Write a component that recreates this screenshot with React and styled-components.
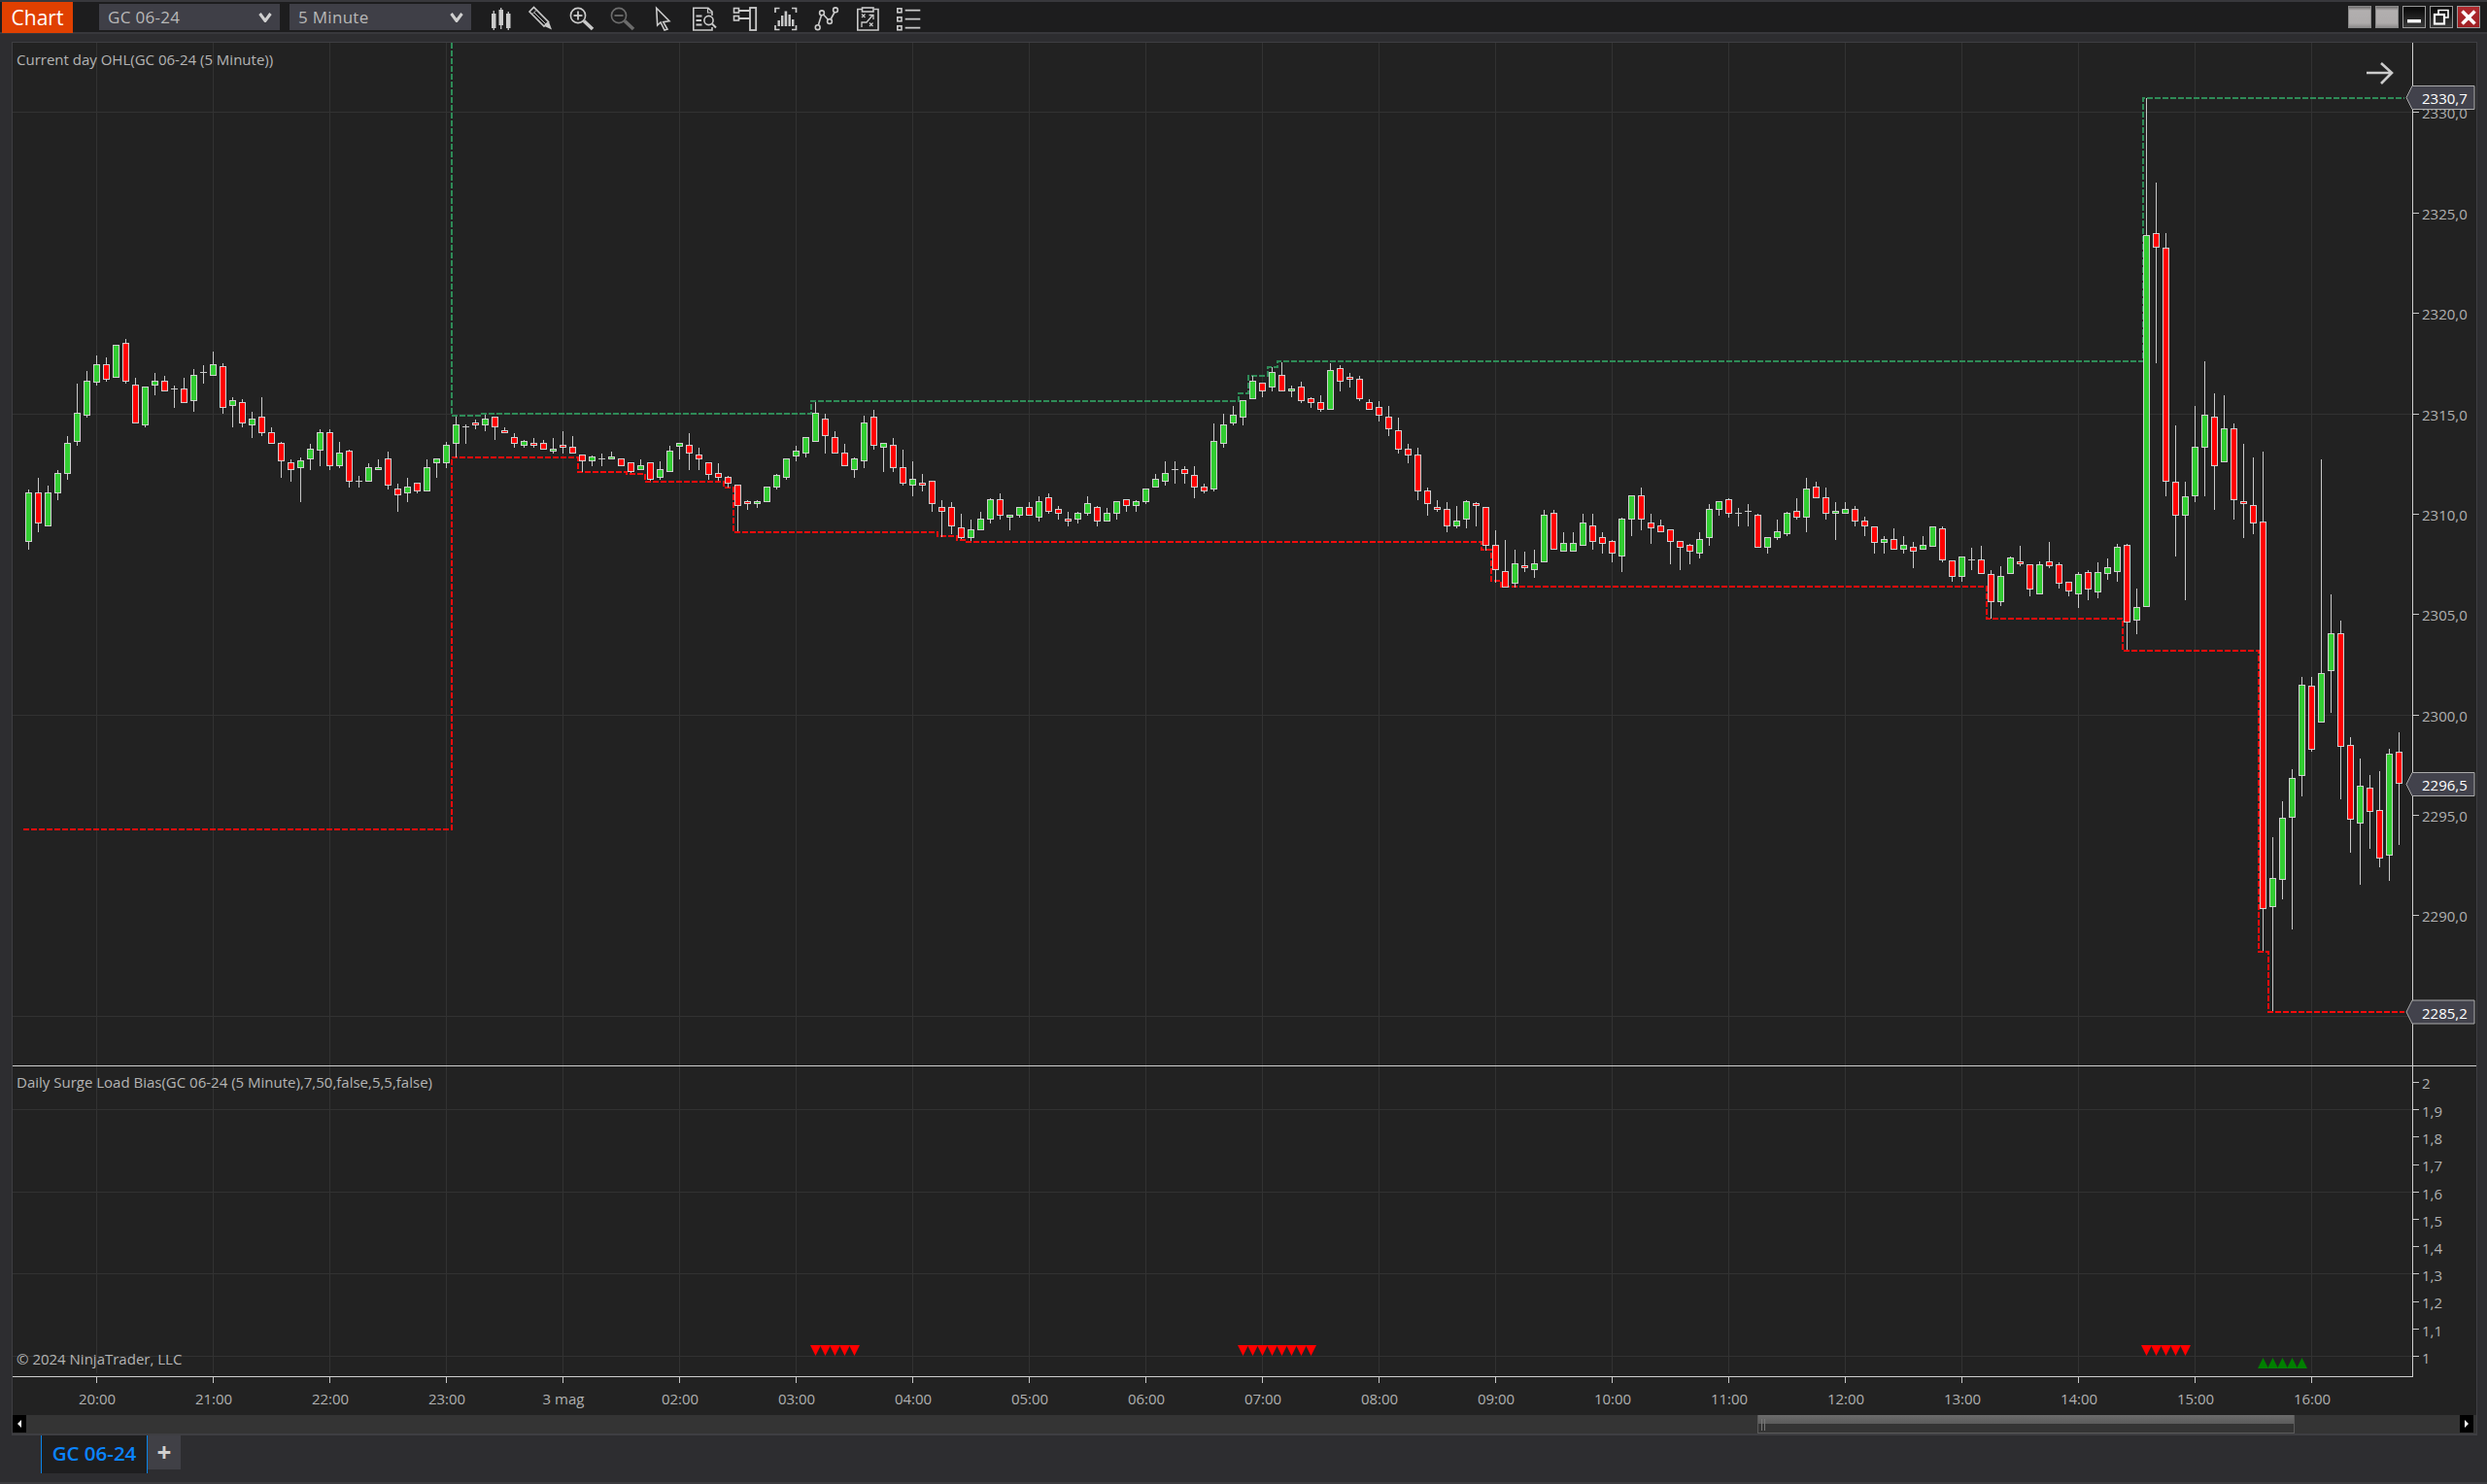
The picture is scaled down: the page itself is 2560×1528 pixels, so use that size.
import React from "react";
import styled, { createGlobalStyle } from "styled-components";

const GlobalStyle = createGlobalStyle`
  html, body { margin: 0; padding: 0; background: #2d2d30; }
  body { font-family: "Open Sans", "Liberation Sans", sans-serif; }
`;

/* ---------- market data, as read from the chart (body top, body bottom, wick top, wick bottom) ---------- */
const SEGMENTS = [
  { start: 0, base: 330, scale: 3, rows: "g 532 683 522 707|r 532 626 486 654|g 532 635 510 635|g 472 533 462 555|g 379 473 357 492|g 286 374 195 387|g 187 293 156 299|g 136 193 108 201|r 136 182 114 189|g 76 176 76 176|r 70 188 57 195|r 199 317 177 317|g 205 323 205 330|g 187 200 162 231|r 187 218 171 218|d 211 212 201 270|r 211 254 177 254|g 169 248 150 282|d 160 161 138 195|g 136 170 96 170|r 142 269 132 288|g 247 263 237 330|r 253 317 243 330|g 304 323 282 363|r 298 347 237 357|r 346 380 330 380|r 379 434 376 486|r 439 461 429 498|g 433 455 423 561|g 397 428 381 462|g 346 403 337 450|r 346 449 337 462|g 409 449 375 456|r 403 497 399 516|d 496 497 480 516|g 454 497 441 497|g 454 461 429 461|r 427 509 405 522|r 520 541 504 591|g 514 533 486 561|r 502 527 502 534|g 454 527 429 527|g 427 440 427 486|g 385 440 375 456|g 322 380 296 422|d 327 329 322 381|r 316 323 306 336|g 304 323 292 342|r 298 329 298 369|r 340 347 330 347|r 361 380 348 393|g 373 386 370 393|r 379 386 363 393|r 379 398 369 398|g 397 404 363 411|r 385 392 342 411|r 391 410 357 410|r 415 434 415 468|g 421 434 418 450|d 427 428 411 450|g 421 428 405 428" },
  { start: 61, base: 350, scale: 3, rows: "r 367 389 367 389|r 379 407 379 412|g 388 401 369 401|r 379 431 379 435|g 400 425 375 431|g 343 407 327 407|g 319 331 319 369|r 325 350 288 402|r 355 368 333 402|r 379 418 379 432|r 412 425 381 435|r 424 443 420 456|r 448 512 448 592|r 499 506 495 525|g 499 506 495 519|g 454 500 454 500|g 418 455 415 461|g 367 425 367 431|g 343 361 327 375|g 301 350 301 363|g 226 314 192 314|r 244 296 228 351|r 301 350 282 350|r 349 389 321 389|g 367 401 363 426|g 256 374 234 396|r 238 326 216 339|g 319 332 319 408|r 325 395 303 408|r 394 443 339 450|g 430 449 375 483|r 442 449 414 468|r 436 506 436 531|r 517 530 495 608|r 517 575 501 600|r 580 612 537 615|g 586 611 555 621|g 553 587 531 587|g 493 554 489 567|r 493 542 474 555|g 541 548 541 588|g 517 542 517 549|r 517 542 501 542|g 499 548 483 561|r 487 530 474 537|r 523 536 513 555|r 553 560 531 576|g 535 554 531 567|g 505 536 483 543|r 517 560 513 576|g 535 560 519 560|g 499 536 499 555|r 493 512 493 531|g 499 512 495 531|g 460 500 460 507|g 430 455 414 455|g 412 437 375 450|d 400 401 375 444|r 400 413 390 444|r 418 455 390 489|r 454 467 444 474|g 313 461 258 468|g 262 320 228 333|g 232 257 204 264|g 187 239 187 263" },
  { start: 126, base: 350, scale: 3, rows: "g 127 182 112 182|r 133 158 133 177|g 100 146 85 158|r 109 158 70 158|g 151 158 141 177|r 145 188 129 194|r 181 194 177 209|r 193 215 171 221|g 94 215 71 215|r 88 128 78 159|r 115 122 102 147|r 121 182 111 188|r 193 215 183 215|r 208 233 189 252|r 238 275 204 297|r 280 338 240 351|r 337 356 321 381|r 355 467 333 495|r 466 506 456 543|r 517 524 495 531|r 523 575 501 594|g 559 575 513 582|g 499 554 495 582|r 505 512 501 576|r 517 635 517 650|r 634 710 588 750|r 715 765 618 765|g 691 752 648 765|r 697 704 654 717|g 691 710 648 735|g 541 686 525 686|r 535 647 525 647|g 628 653 594 653|g 628 653 594 653|g 565 635 537 635|r 574 623 537 648|r 610 629 594 660|r 622 659 618 687|g 553 668 549 717|g 481 554 481 606|r 481 554 456 588|r 565 581 537 630|r 574 593 555 593|r 586 623 586 693|r 622 641 622 711|r 634 653 630 693|g 616 659 594 675|g 523 611 507 636|g 499 524 499 543|r 493 536 489 549|d 535 536 519 576|d 529 530 507 576|r 541 641 537 641|g 610 641 610 660|g 592 611 555 618|g 535 599 531 606|r 529 548 489 555|g 460 548 426 594|r 454 488 438 488|r 487 536 456 555|g 529 536 501 618|g 523 536 501 536|r 523 560 513 576|r 559 575 547 606" },
  { start: 190, base: 80, scale: 2.613, rows: "r 1206 1252 1206 1280|g 1242 1252 1233 1280|r 1242 1269 1213 1269|g 1258 1269 1233 1280|r 1263 1274 1249 1320|g 1258 1269 1233 1269|g 1206 1263 1206 1263|r 1212 1298 1208 1303|r 1298 1344 1298 1355|g 1287 1344 1287 1355|d 1297 1298 1265 1325|r 1297 1334 1260 1334|r 1334 1410 1325 1456|g 1340 1410 1315 1422|g 1292 1334 1288 1334|r 1302 1308 1260 1314|r 1308 1378 1308 1396|g 1308 1389 1300 1389|r 1302 1314 1249 1320|r 1308 1361 1304 1374|r 1355 1383 1355 1396|g 1334 1389 1330 1427|r 1329 1378 1325 1406|g 1329 1384 1304 1400|g 1318 1334 1294 1351|g 1263 1329 1255 1356|r 1258 1465 1255 1540|g 1425 1460 1375 1496|g 422 1425 55 1425|r 417 458 282 768|r 458 1086 418 1126|r 1086 1178 936 1288|g 1125 1178 1086 1406|g 994 1125 883 1142|g 908 995 763 1126|r 913 1044 849 1163|g 944 1036 855 1036|r 944 1136 930 1189|r 1140 1146 985 1239|r 1151 1199 1022 1228" },
  { start: 230, base: 540, scale: 2.958, rows: "r -10 1170 -222 1299|g 1078 1164 953 1483|g 894 1084 843 1141|g 773 894 746 1233|g 487 767 464 827|r 492 687 464 693|g 454 602 -198 602|g 332 448 213 574|r 332 676 293 836|r 670 900 648 999|g 797 912 713 1097|r 803 877 763 988|r 871 1019 751 1043|g 699 1010 684 1085|r 693 791 633 976" },
];

const BARS = SEGMENTS.flatMap(({ start, base, scale, rows }) =>
  rows.split("|").map((row, i) => {
    const [kind, ...values] = row.split(" ");
    const [bodyTop, bodyBottom, wickTop, wickBottom] = values.map((v) => Math.round(base + Number(v) / scale));
    return { x: 29.5 + (start + i) * 10, kind, bodyTop, bodyBottom, wickTop, wickBottom };
  })
);

const HIGH_PATH = "465,44 465,428 496,428 496,426 835,426 835,413 1275,413 1275,405 1285,405 1285,387 1305,387 1305,378 1315,378 1315,372 2206,372 2206,101 2475,101";
const LOW_PATH = "24,854 465,854 465,471 595,471 595,486 645,486 645,488 664,488 664,496 745,496 745,502 755,502 755,548 965,548 965,552 985,552 985,556 994,556 994,558 1525,558 1525,566 1535,566 1535,598 1545,598 1545,604 2045,604 2045,637 2185,637 2185,670 2325,670 2325,980 2335,980 2335,1042 2475,1042";

const HOURS = ["20:00", "21:00", "22:00", "23:00", "3 mag", "02:00", "03:00", "04:00", "05:00", "06:00", "07:00", "08:00", "09:00", "10:00", "11:00", "12:00", "13:00", "14:00", "15:00", "16:00"];
const GRID_X = HOURS.map((_, i) => 99.5 + i * 120);
const priceY = (p) => 425.5 + (2315 - p) * 20.67;
const PRICE_TICKS = [2330, 2325, 2320, 2315, 2310, 2305, 2300, 2295, 2290];
const PRICE_GRID = [2330, 2315, 2300, 2285];
const BADGES = [
  { label: "2330,7", cy: 100.5 },
  { label: "2296,5", cy: 807.5 },
  { label: "2285,2", cy: 1042 },
];
const LOWER_TICKS = [
  ["2", 1114], ["1,9", 1142.5], ["1,8", 1170.5], ["1,7", 1199], ["1,6", 1227.5], ["1,5", 1255.5],
  ["1,4", 1283.5], ["1,3", 1311.5], ["1,2", 1340], ["1,1", 1368.5], ["1", 1396.5],
];
const LOWER_GRID = [1142.5, 1227.5, 1311.5, 1396.5];
const DOWN_MARKS = [81, 82, 83, 84, 85, 125, 126, 127, 128, 129, 130, 131, 132, 218, 219, 220, 221, 222];
const UP_MARKS = [230, 231, 232, 233, 234];
const barX = (k) => 29.5 + k * 10;

/* ---------- page shell ---------- */
const Window = styled.div`
  width: 2560px;
  height: 1528px;
  display: flex;
  flex-direction: column;
  background: #2d2d30;
  overflow: hidden;
  box-sizing: border-box;
  border-bottom: 2px solid #3a3a3e;
`;

const Toolbar = styled.header`
  height: 35px;
  flex: none;
  box-sizing: border-box;
  display: flex;
  align-items: center;
  background: #1d1d1e;
  border-top: 2px solid #38383c;
  border-bottom: 2px solid #38383c;
`;

const ChartTab = styled.div`
  width: 73px;
  height: 32px;
  margin-left: 2px;
  margin-top: 1px;
  display: flex;
  align-items: center;
  justify-content: center;
  background: #e04000;
  color: #fff;
  font-size: 21px;
`;

const Dropdown = styled.div`
  width: ${(p) => p.$width}px;
  height: 27px;
  margin-left: ${(p) => p.$gap}px;
  box-sizing: border-box;
  padding: 0 8px 0 9px;
  display: flex;
  align-items: center;
  justify-content: space-between;
  background: #3f3f47;
  color: #b8b8b8;
  font-size: 17px;
  letter-spacing: 0.3px;
`;

const Chevron = styled.svg`
  width: 14px;
  height: 10px;
  fill: none;
  stroke: #d0d0d0;
  stroke-width: 3;
`;

const IconRow = styled.div`
  display: flex;
  margin-left: 9px;
`;

const IconButton = styled.div`
  width: 42px;
  height: 31px;
  display: flex;
  align-items: center;
  justify-content: center;
`;

const Glyph = styled.svg`
  width: 32px;
  height: 32px;
  fill: none;
  stroke: ${(p) => (p.$dim ? "#6c6c6c" : "#cacaca")};
  stroke-width: 1.6;
`;

const WindowButtons = styled.div`
  margin-left: auto;
  padding-right: 7px;
  display: flex;
  gap: 4px;
`;

const WindowButton = styled.div`
  width: 24px;
  height: 23px;
  box-sizing: border-box;
  display: flex;
  align-items: center;
  justify-content: center;
  border: 1px solid ${(p) => (p.$kind === "blank" ? "#8a8a8a" : "#9a9a9a")};
  background: ${(p) =>
    p.$kind === "blank"
      ? "linear-gradient(#6e6c6c, #b2afaf 18%, #aeabab 80%, #8f8d8d)"
      : p.$kind === "close"
      ? "linear-gradient(#b02a2e, #a02024)"
      : "linear-gradient(#060606, #3a3a3a)"};
`;

const ChartFrame = styled.main`
  flex: none;
  padding: 8px 10px 0 12px;
  display: flex;
  flex-direction: column;
`;

const ChartBody = styled.section`
  display: flex;
  flex-direction: column;
  background: #222222;
  border-left: 1px solid #3e3e42;
  border-top: 1px solid #3e3e42;
  border-right: 1px solid #3e3e42;
`;

const Pane = styled.div`
  position: relative;
  height: ${(p) => p.$height}px;
  flex: none;
`;

const PaneDrawing = styled.svg`
  display: block;
  width: 100%;
  height: 100%;
`;

const Legend = styled.div`
  position: absolute;
  left: 4px;
  top: ${(p) => p.$top}px;
  color: #b4b4b4;
  font-size: 15px;
  line-height: 20px;
  white-space: nowrap;
`;

const AxisText = styled.text`
  font-family: "Open Sans", "Liberation Sans", sans-serif;
  font-size: 15px;
  fill: ${(p) => (p.$bright ? "#ffffff" : "#b0b0b0")};
`;

const TimeAxis = styled.div`
  height: 39px;
  flex: none;
  padding-left: 27px;
  display: flex;
  color: #b0b0b0;
  font-size: 15px;
`;

const TimeLabel = styled.div`
  position: relative;
  width: 120px;
  flex: none;
  text-align: center;
  padding-top: 12px;
  line-height: 20px;
  &::before {
    content: "";
    position: absolute;
    left: 59px;
    top: 0;
    width: 1px;
    height: 6px;
    background: #c8c8c8;
  }
`;

const Scrollbar = styled.div`
  height: 21px;
  flex: none;
  display: flex;
  background: #343434;
  box-sizing: border-box;
  border-bottom: 2px solid #3e3e42;
`;

const ScrollArrow = styled.div`
  width: 14px;
  height: 18px;
  flex: none;
  margin-left: ${(p) => (p.$right ? "auto" : "0")};
  margin-right: ${(p) => (p.$right ? "3px" : "0")};
  display: flex;
  align-items: center;
  justify-content: center;
  background: #000;
  &::after {
    content: "";
    border-style: solid;
    border-width: 4px 0 4px 0;
    border-color: transparent #fff;
    border-left-width: ${(p) => (p.$right ? "4px" : "0")};
    border-right-width: ${(p) => (p.$right ? "0" : "4px")};
  }
`;

const ScrollThumb = styled.div`
  position: relative;
  width: 553px;
  height: 19px;
  margin-left: 1782px;
  box-sizing: border-box;
  border: 1px solid #5a5a5a;
  border-top: none;
  background: linear-gradient(#6c6c6c, #5a5a5a 52%, #343434 52%, #343434);
  &::before {
    content: "";
    position: absolute;
    left: 3px;
    top: 4px;
    width: 1px;
    height: 12px;
    background: #777;
    box-shadow: 3px 0 0 #777;
  }
`;

const TabBar = styled.nav`
  flex: 1;
  display: flex;
  align-items: flex-start;
  padding-left: 42px;
`;

const Tab = styled.div`
  width: 110px;
  height: 39px;
  box-sizing: border-box;
  padding-bottom: 3px;
  display: flex;
  align-items: center;
  justify-content: center;
  background: #1e1e1f;
  border-left: 1px solid #0a84e8;
  border-right: 1px solid #0a84e8;
  color: #0a84ff;
  font-size: 20.5px;
  font-weight: 600;
`;

const AddTab = styled.div`
  width: 34px;
  height: 35px;
  padding-bottom: 2px;
  box-sizing: border-box;
  display: flex;
  align-items: center;
  justify-content: center;
  background: #404046;
  color: #cfcfcf;
  font-size: 26px;
  font-weight: 700;
  line-height: 1;
`;

/* ---------- toolbar icons ---------- */
const CandlesIcon = () => (
  <Glyph viewBox="0 0 32 32">
    <g fill="#cacaca" stroke="none">
      <rect x="7" y="12" width="4.5" height="15" /><rect x="8.6" y="9" width="1.3" height="20" />
      <rect x="14.5" y="8" width="4.5" height="16" /><rect x="16.1" y="6" width="1.3" height="22" />
      <rect x="22" y="12" width="4.5" height="15" /><rect x="23.6" y="10" width="1.3" height="19" />
    </g>
  </Glyph>
);
const PencilIcon = () => (
  <Glyph viewBox="0 0 32 32">
    <path d="M4 10l4.5-4.5L23.5 20.5 19 25z" />
    <path d="M7 12.5l4-4M9 11l12 12M12 9l11 11" strokeWidth="1" />
    <path d="M19.5 25l4.5-4.5 3 8z" fill="#cacaca" stroke="none" />
  </Glyph>
);
const ZoomIcon = ({ minus }) => (
  <Glyph viewBox="0 0 32 32" $dim={minus}>
    <circle cx="12" cy="14" r="7.6" />
    <path d="M7.5 14h9" strokeWidth="1.8" />
    {!minus && <path d="M12 9.5v9" strokeWidth="1.8" />}
    <path d="M18 19.5l9 8.5" strokeWidth="3.6" />
  </Glyph>
);
const CursorIcon = () => (
  <Glyph viewBox="0 0 32 32">
    <path d="M8.7 6.3L22 19.7l-6.3 1L20 28l-3 1-4-8-3.3 3z" strokeLinejoin="miter" />
  </Glyph>
);
const ReportIcon = () => (
  <Glyph viewBox="0 0 32 32">
    <path d="M24 14V10L20 6.3H4.8V29H24V26" />
    <path d="M19.5 6.3V11H24" strokeWidth="1.2" />
    <path d="M7.5 14.5h6M7.5 19h5.5M7.5 23.5h6" strokeWidth="1.8" />
    <circle cx="20.5" cy="19" r="4.6" />
    <path d="M24 22.5l4 4" strokeWidth="2" />
  </Glyph>
);
const DataBoxIcon = () => (
  <Glyph viewBox="0 0 32 32">
    <rect x="4.5" y="6.5" width="5" height="4.5" />
    <rect x="4.5" y="14.5" width="5" height="4.5" />
    <path d="M10 9h11M10 17h11" strokeWidth="1.8" />
    <rect x="21" y="6" width="6.2" height="23" strokeWidth="1.8" />
  </Glyph>
);
const BarsIcon = () => (
  <Glyph viewBox="0 0 32 32">
    <path d="M9.5 6.5H5V11M22 6.5h4.5V11M9.5 28.5H5V24M22 28.5h4.5V24" strokeWidth="1.7" />
    <g fill="#cacaca" stroke="none">
      <rect x="7.5" y="19" width="2.4" height="6" /><rect x="11" y="14" width="2.4" height="11" />
      <rect x="14.6" y="9.5" width="2.6" height="15.5" /><rect x="18.5" y="13" width="2.4" height="12" />
      <rect x="22" y="18" width="2.4" height="7" />
    </g>
  </Glyph>
);
const LinksIcon = () => (
  <Glyph viewBox="0 0 32 32">
    <path d="M7.3 24L10.6 13.6M12.6 13l4.8 5.2M20.3 17.5l3.8-7" />
    <circle cx="6.7" cy="26.2" r="2.4" /><circle cx="11" cy="11.3" r="2.4" />
    <circle cx="19" cy="20" r="2.4" /><circle cx="25" cy="8.3" r="2.4" />
  </Glyph>
);
const StrategyIcon = () => (
  <Glyph viewBox="0 0 32 32">
    <path d="M10 7.5H5.8V29H27V7.5h-4.2" />
    <rect x="10.5" y="6" width="11.5" height="4" />
    <path d="M10 12.5l3.5 3.5M13.5 12.5L10 16M18 21.5l3.5 3.5M21.5 21.5L18 25" strokeWidth="1.2" />
    <path d="M10 26v-5h5l6-7M17.5 13.5H22V18" strokeWidth="1.3" />
  </Glyph>
);
const ListIcon = () => (
  <Glyph viewBox="0 0 32 32">
    <rect x="4.8" y="6.8" width="4.2" height="4" /><rect x="4.8" y="15.8" width="4.2" height="4" /><rect x="4.8" y="24.8" width="4.2" height="4" />
    <path d="M12.7 8.7H28.3M12.7 17.7H28.3M12.7 26.7H28.3" strokeWidth="1.8" />
  </Glyph>
);

const TOOL_ICONS = [
  <CandlesIcon />, <PencilIcon />, <ZoomIcon />, <ZoomIcon minus />, <CursorIcon />, <ReportIcon />,
  <DataBoxIcon />, <BarsIcon />, <LinksIcon />, <StrategyIcon />, <ListIcon />,
];

/* ---------- chart drawings ---------- */
const Candle = ({ x, kind, bodyTop, bodyBottom, wickTop, wickBottom }) => {
  const fill = kind === "g" ? "#32cd32" : "#ff0000";
  return (
    <g>
      <line x1={x} x2={x} y1={wickTop} y2={wickBottom} stroke="#c8c8c8" strokeWidth="1" />
      {kind === "d" ? (
        <line x1={x - 3.5} x2={x + 3.5} y1={bodyTop + 0.5} y2={bodyTop + 0.5} stroke="#c8c8c8" strokeWidth="1" />
      ) : (
        <rect x={x - 3} y={bodyTop + 0.5} width="6" height={Math.max(1, bodyBottom - bodyTop - 1)} fill={fill} stroke="#d0d0d0" strokeWidth="1" />
      )}
    </g>
  );
};

const PriceChart = () => (
  <PaneDrawing viewBox="13 44 2536 1053" shapeRendering="crispEdges">
    <g stroke="#323232" strokeWidth="1">
      {GRID_X.map((x) => <line key={x} x1={x} x2={x} y1={44} y2={1097} />)}
      {PRICE_GRID.map((p) => <line key={p} x1={13} x2={2483} y1={Math.round(priceY(p)) + 0.5} y2={Math.round(priceY(p)) + 0.5} />)}
    </g>
    <line x1={2483.5} x2={2483.5} y1={44} y2={1097} stroke="#cfcfcf" />
    <g fill="none" strokeWidth="2" strokeDasharray="6 2">
      <polyline points={HIGH_PATH} stroke="#2e8b57" />
      <polyline points={LOW_PATH} stroke="#f40c0c" />
    </g>
    {BARS.map((bar) => <Candle key={bar.x} {...bar} />)}
    {PRICE_TICKS.map((p) => {
      const y = Math.round(priceY(p)) + 0.5;
      return (
        <g key={p}>
          <line x1={2484} x2={2490} y1={y} y2={y} stroke="#c8c8c8" />
          <AxisText x={2493} y={y + 6.5} shapeRendering="auto">{`${p},0`}</AxisText>
        </g>
      );
    })}
    {BADGES.map(({ label, cy }) => (
      <g key={label} shapeRendering="auto">
        <polygon points={`2477,${cy} 2483,${cy - 12} 2547,${cy - 12} 2547,${cy + 12} 2483,${cy + 12}`} fill="#42424c" stroke="#ababab" strokeWidth="1" />
        <AxisText $bright x={2493} y={cy + 6.5}>{label}</AxisText>
      </g>
    ))}
    <path d="M2436 75h26M2451 65l11 10-11 11" fill="none" stroke="#cccccc" strokeWidth="2.6" shapeRendering="auto" />
  </PaneDrawing>
);

const IndicatorChart = () => (
  <PaneDrawing viewBox="13 1097 2536 321" shapeRendering="crispEdges">
    <line x1={13} x2={2549} y1={1097.5} y2={1097.5} stroke="#d0d0d0" />
    <g stroke="#323232" strokeWidth="1">
      {GRID_X.map((x) => <line key={x} x1={x} x2={x} y1={1098} y2={1414} />)}
      {LOWER_GRID.map((y) => <line key={y} x1={13} x2={2483} y1={y} y2={y} />)}
    </g>
    <line x1={2483.5} x2={2483.5} y1={1097} y2={1418} stroke="#cfcfcf" />
    <line x1={13} x2={2484} y1={1417.5} y2={1417.5} stroke="#cfcfcf" strokeWidth="1" />
    {DOWN_MARKS.map((k) => (
      <polygon key={k} shapeRendering="auto" fill="#ff0000" points={`${barX(k) - 5.5},1385 ${barX(k) + 5.5},1385 ${barX(k)},1396`} />
    ))}
    {UP_MARKS.map((k) => (
      <polygon key={k} shapeRendering="auto" fill="#008000" points={`${barX(k) - 5.5},1409 ${barX(k) + 5.5},1409 ${barX(k)},1398`} />
    ))}
    {LOWER_TICKS.map(([label, y]) => (
      <g key={label}>
        <line x1={2484} x2={2490} y1={y} y2={y} stroke="#c8c8c8" />
        <AxisText x={2493} y={y + 7} shapeRendering="auto">{label}</AxisText>
      </g>
    ))}
  </PaneDrawing>
);

export default function App() {
  return (
    <Window>
      <GlobalStyle />
      <Toolbar>
        <ChartTab>Chart</ChartTab>
        <Dropdown $width={186} $gap={27}>
          GC 06-24
          <Chevron viewBox="0 0 14 10"><path d="M1.5 1l5.5 7.5L12.5 1" /></Chevron>
        </Dropdown>
        <Dropdown $width={187} $gap={10}>
          5 Minute
          <Chevron viewBox="0 0 14 10"><path d="M1.5 1l5.5 7.5L12.5 1" /></Chevron>
        </Dropdown>
        <IconRow>
          {TOOL_ICONS.map((icon, i) => <IconButton key={i}>{icon}</IconButton>)}
        </IconRow>
        <WindowButtons>
          <WindowButton $kind="blank" />
          <WindowButton $kind="blank" />
          <WindowButton $kind="dark">
            <svg width="16" height="16" viewBox="0 0 16 16"><rect x="1" y="10" width="14" height="3.4" fill="#fff" /></svg>
          </WindowButton>
          <WindowButton $kind="dark">
            <svg width="18" height="18" viewBox="0 0 18 18" fill="none" stroke="#fff">
              <path d="M6 5V1.5h10V9h-3" strokeWidth="1.6" />
              <rect x="2" y="6" width="10" height="9.5" strokeWidth="2.2" />
            </svg>
          </WindowButton>
          <WindowButton $kind="close">
            <svg width="18" height="16" viewBox="0 0 18 16" stroke="#fff" strokeWidth="3.6"><path d="M2.5 1.5l13 13M15.5 1.5l-13 13" /></svg>
          </WindowButton>
        </WindowButtons>
      </Toolbar>

      <ChartFrame>
        <ChartBody>
          <Pane $height={1053}>
            <PriceChart />
            <Legend $top={7}>Current day OHL(GC 06-24 (5 Minute))</Legend>
          </Pane>
          <Pane $height={321}>
            <IndicatorChart />
            <Legend $top={7}>Daily Surge Load Bias(GC 06-24 (5 Minute),7,50,false,5,5,false)</Legend>
            <Legend $top={292}>© 2024 NinjaTrader, LLC</Legend>
          </Pane>
          <TimeAxis>
            {HOURS.map((h) => <TimeLabel key={h}>{h}</TimeLabel>)}
          </TimeAxis>
          <Scrollbar>
            <ScrollArrow />
            <ScrollThumb />
            <ScrollArrow $right />
          </Scrollbar>
        </ChartBody>
      </ChartFrame>

      <TabBar>
        <Tab>GC 06-24</Tab>
        <AddTab>+</AddTab>
      </TabBar>
    </Window>
  );
}
